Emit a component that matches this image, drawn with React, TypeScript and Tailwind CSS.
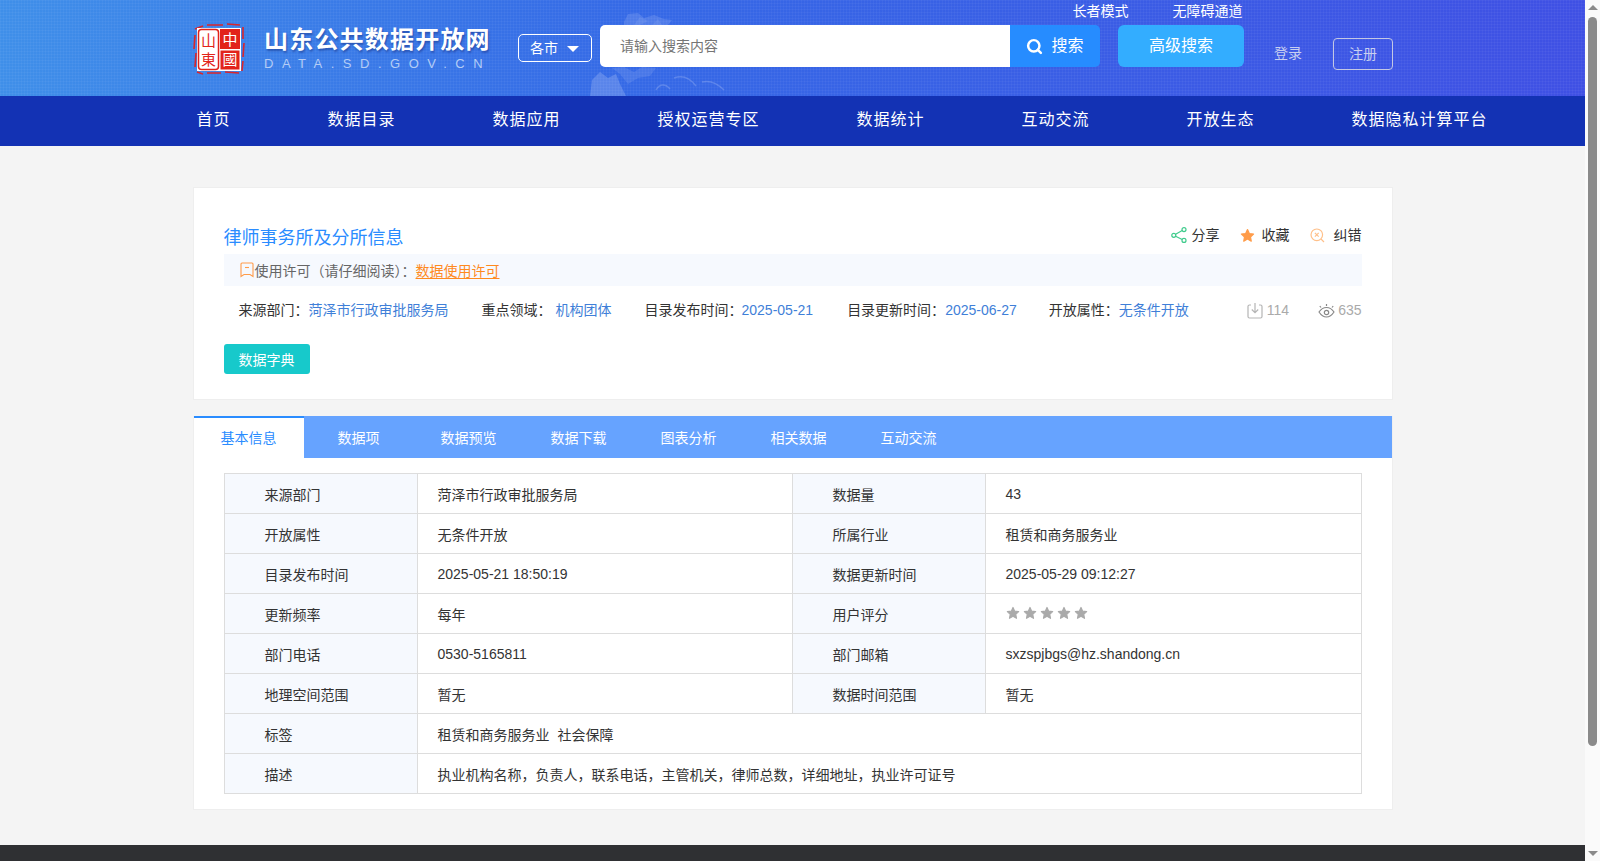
import { Search } from "lucide-react";

const font = `font-['Liberation_Sans','Noto_Sans_CJK_SC',sans-serif]`;

const navItems = ["首页", "数据目录", "数据应用", "授权运营专区", "数据统计", "互动交流", "开放生态", "数据隐私计算平台"];
const tabs = ["基本信息", "数据项", "数据预览", "数据下载", "图表分析", "相关数据", "互动交流"];

const rows: [string, string, string, string][] = [
  ["来源部门", "菏泽市行政审批服务局", "数据量", "43"],
  ["开放属性", "无条件开放", "所属行业", "租赁和商务服务业"],
  ["目录发布时间", "2025-05-21 18:50:19", "数据更新时间", "2025-05-29 09:12:27"],
  ["更新频率", "每年", "用户评分", ""],
  ["部门电话", "0530-5165811", "部门邮箱", "sxzspjbgs@hz.shandong.cn"],
  ["地理空间范围", "暂无", "数据时间范围", "暂无"],
];

function Logo() {
  return (
    <svg width="52" height="52" viewBox="0 0 52 52" className="shrink-0">
      <path d="M2 6 L10 3 M14 2 L30 2 M34 1 L47 2 M50 4 L50 16 M51 20 L50 34 M50 38 L49 48 M46 50 L32 49 M28 50 L14 50 M10 51 L4 49 M2 44 L3 30 M1 26 L2 12" fill="none" stroke="#d9262c" strokeWidth="1.6" />
      <rect x="4" y="5" width="44" height="43" fill="#fff" />
      <rect x="5.500" y="6.500" width="20" height="40" rx="3" fill="#fff" stroke="#e2231a" strokeWidth="1.500" />
      <rect x="27" y="6" width="20" height="20" fill="#e2231a" />
      <rect x="27.500" y="27.500" width="19" height="19" fill="#e2231a" />
      <text x="15.500" y="23" textAnchor="middle" fontSize="15" fill="#e2231a" fontFamily="'Noto Sans CJK SC',sans-serif">山</text>
      <text x="15.500" y="42" textAnchor="middle" fontSize="15" fill="#e2231a" fontFamily="'Noto Sans CJK SC',sans-serif">東</text>
      <text x="37" y="22" textAnchor="middle" fontSize="15" fill="#fff" fontFamily="'Noto Sans CJK SC',sans-serif">中</text>
      <text x="37" y="42" textAnchor="middle" fontSize="15" fill="#fff" fontFamily="'Noto Sans CJK SC',sans-serif">國</text>
    </svg>
  );
}

function Star({ className }: { className: string }) {
  return (
    <svg viewBox="0 0 24 24" className={className} fill="currentColor" stroke="currentColor" strokeWidth="2" strokeLinejoin="round">
      <path d="M12 2.500l2.900 6.300 6.800.8-5 4.700 1.300 6.800L12 17.700l-6 3.400 1.300-6.800-5-4.700 6.800-.8z" />
    </svg>
  );
}

function Header() {
  return (
    <div className="relative h-[96px] overflow-hidden [background-image:linear-gradient(rgba(255,255,255,.035)_1px,transparent_1px),linear-gradient(90deg,rgba(255,255,255,.035)_1px,transparent_1px),linear-gradient(90deg,#3f8fe9,#3569e6_40%,#3f50e4)] [background-size:3px_3px,3px_3px,100%_100%]">
      {/* faded map art behind the search box */}
      <svg width="160" height="96" viewBox="0 0 160 96" className="absolute left-[590px] top-0" fill="#fff">
        <path opacity=".13" d="M34 22 L38 14 L48 13 L54 18 L64 15 L74 19 L82 20 L78 25 L34 25 Z" />
        <path opacity=".08" d="M44 25 L50 17 L58 21 L50 25 Z M62 25 L68 19 L72 25 Z" />
        <path opacity=".18" d="M0 96 L2 80 L10 72 L18 78 L26 74 L30 84 L36 96 Z" />
        <path opacity=".1" d="M22 68 L34 67 L44 72 L52 67 L66 68 L60 76 L48 78 L38 84 L30 74 Z" />
        <path opacity=".18" fill="none" stroke="#fff" strokeWidth="1.500" d="M66 90 C70 83 76 84 80 89 M84 78 C92 75 100 78 106 86 M112 82 C120 80 128 84 134 90" />
      </svg>
      <div className="relative w-[1200px] mx-auto h-full">
        <div className="h-[25px] flex justify-end gap-[44px] pr-[150px] text-sm leading-[23px] text-white">
          <span>长者模式</span>
          <span>无障碍通道</span>
        </div>
        <div className="flex items-start pl-[0.500px]">
          <div className="-mt-[2px]">
            <Logo />
          </div>
          <div className="ml-[19px] w-[254px] shrink-0 pt-[1px]">
            <div className="text-[24px] leading-[28px] font-bold tracking-[1.200px] text-white whitespace-nowrap [text-shadow:1px_2px_2px_rgba(20,40,120,.45)]">山东公共数据开放网</div>
            <div className="text-[13px] leading-[14px] mt-[3px] tracking-[8.500px] text-[#b4cdf6] whitespace-nowrap">DATA.SD.GOV.CN</div>
          </div>
          <div className="mt-[9px] w-[74px] h-[28px] shrink-0 border border-white rounded-[5px] flex items-center pl-[11px] gap-[9px] text-sm text-white">
            <span>各市</span>
            <span className="w-0 h-0 border-x-[6px] border-x-transparent border-t-[6px] border-t-white mt-[2px]" />
          </div>
          <div className="ml-[8px] flex h-[42px] shrink-0">
            <div className="w-[410px] bg-white rounded-l-[5px] pl-5 flex items-center text-sm text-[#757575]">请输入搜索内容</div>
            <div className="w-[90px] bg-[#268cff] rounded-r-[5px] flex items-center justify-center gap-[8px] text-[16px] text-white">
              <Search size={17} strokeWidth={3.500} />
              <span>搜索</span>
            </div>
          </div>
          <div className="ml-[18px] w-[126px] h-[42px] shrink-0 bg-[#33adff] rounded-[6px] flex items-center justify-center text-[16px] text-white">高级搜索</div>
          <span className="ml-[30px] mt-[9px] shrink-0 whitespace-nowrap text-sm leading-[38px] text-[#c8cff0]">登录</span>
          <div className="ml-[31px] mt-[13px] w-[60px] h-[32px] shrink-0 border border-[#c4c8e4] rounded-[4px] flex items-center justify-center text-sm text-[#c8cff0]">注册</div>
        </div>
      </div>
    </div>
  );
}

function Nav() {
  return (
    <div className="h-[50px] bg-[#1332b4]">
      <div className="w-[1200px] mx-auto h-full flex items-center gap-[97px] pl-[4px] pb-[2px] text-[16px] tracking-[1px] text-white whitespace-nowrap">
        {navItems.map((n) => (
          <span key={n}>{n}</span>
        ))}
      </div>
    </div>
  );
}

function Summary() {
  return (
    <div className="mt-[41px] h-[213px] bg-white border border-[#eeeeee] px-[30px] pt-[37px]">
      <div className="flex items-start justify-between h-[29px]">
        <div className="text-[18px] leading-[26px] text-[#2a8cff]">律师事务所及分所信息</div>
        <div className="flex items-center text-sm text-[#333]">
          <svg width="16" height="16" viewBox="0 0 16 16" fill="none" stroke="#3fcb8c" strokeWidth="1.200">
            <circle cx="2.800" cy="8.300" r="2" />
            <circle cx="13" cy="2.600" r="2" />
            <circle cx="13" cy="13.400" r="2" />
            <path d="M4.600 7.300l6.600-3.700M4.600 9.300l6.600 3.200" />
          </svg>
          <span className="ml-[5px]">分享</span>
          <Star className="ml-[20px] w-[15px] h-[15px] text-[#ff9c4a]" />
          <span className="ml-[7px]">收藏</span>
          <svg width="15" height="15" viewBox="0 0 15 15" fill="none" stroke="#ffc08a" strokeWidth="1.200" className="ml-[20px]">
            <circle cx="6.800" cy="6.800" r="5.800" />
            <path d="M4.900 4.900l3.800 3.800M8.700 4.900l-3.800 3.800M11 11l3 3" />
          </svg>
          <span className="ml-[9px]">纠错</span>
        </div>
      </div>
      <div className="h-[32px] bg-[#f6f9fe] flex items-center pl-[16px] pt-[1px] text-sm text-[#666]">
        <svg width="14" height="16" viewBox="0 0 14 16" fill="none" stroke="#ff9c4a" strokeWidth="1.100" className="-mt-[2px] mr-[1px]">
          <path d="M2 1h10a1 1 0 0 1 1 1v12.500l-3-2H4l-3 2V2a1 1 0 0 1 1-1z" />
          <path d="M5 5.500h4" />
        </svg>
        <span>使用许可（请仔细阅读）：</span>
        <span className="text-[#ff8a1e] underline underline-offset-2">数据使用许可</span>
      </div>
      <div className="flex items-center h-[39px] mt-[4px] pl-[15px] text-sm text-[#333] whitespace-nowrap">
        <span>来源部门：</span>
        <span className="text-[#3f7fd8]">菏泽市行政审批服务局</span>
        <span className="ml-[33px]">重点领域：</span>
        <span className="ml-[4px] text-[#3f7fd8]">机构团体</span>
        <span className="ml-[33px]">目录发布时间：</span>
        <span className="-ml-[1px] text-[#3f7fd8]">2025-05-21</span>
        <span className="ml-[34px]">目录更新时间：</span>
        <span className="text-[#3f7fd8]">2025-06-27</span>
        <span className="ml-[32px]">开放属性：</span>
        <span className="text-[#3f7fd8]">无条件开放</span>
        <span className="ml-auto flex items-center text-[#aaaaaa]">
          <svg width="16" height="17" viewBox="0 0 16 17" fill="none" stroke="#b5b5b5" strokeWidth="1.200" className="mt-[2px]">
            <path d="M4 3H2.500A1.500 1.500 0 0 0 1 4.500v10A1.500 1.500 0 0 0 2.500 16h11a1.500 1.500 0 0 0 1.500-1.500v-10A1.500 1.500 0 0 0 13.500 3H12" />
            <path d="M8 1v9M4.800 7.500L8 10.700l3.200-3.200" />
          </svg>
          <span className="ml-[4px]">114</span>
          <svg width="17" height="16" viewBox="0 0 17 16" fill="none" stroke="#888" strokeWidth="1.200" className="ml-[29px] mt-[3px]">
            <path d="M1 9c2-3 4.500-4.500 7.500-4.500S14 6 16 9c-2 3-4.500 5-7.500 5S3 12 1 9z" />
            <circle cx="8.500" cy="9.500" r="2.200" />
            <path d="M3 4.500L1.800 3M8.500 3V1M14 4.500L15.200 3" />
          </svg>
          <span className="ml-[3px]">635</span>
        </span>
      </div>
      <div className="mt-[15px] w-[86px] h-[30px] pt-[1px] bg-[#17c9cb] rounded-[3px] flex items-center justify-center text-sm text-white">数据字典</div>
    </div>
  );
}

function InfoTable() {
  const label = "w-[193px] bg-[#f6f9fe] border border-[#dddddd] pl-[40px] pt-[2px] text-[#333]";
  const value = "border border-[#dddddd] pl-[20px] text-[#333]";
  const cjkValue = `${value} pt-[2px]`;
  const valueClass = (text: string) => (/[^\x00-\x7f]/.test(text) ? cjkValue : value);
  return (
    <table className="w-[1137px] table-fixed border-collapse text-sm">
      <colgroup>
        <col className="w-[193px]" />
        <col className="w-[375px]" />
        <col className="w-[193px]" />
        <col className="w-[376px]" />
      </colgroup>
      <tbody>
        {rows.map((r) => (
          <tr key={r[0]} className="h-[40px]">
            <td className={label}>{r[0]}</td>
            <td className={valueClass(r[1])}>{r[1]}</td>
            <td className={label}>{r[2]}</td>
            <td className={valueClass(r[3])}>
              {r[2] === "用户评分" ? (
                <div className="flex gap-[3px] -mt-[1px]">
                  {[0, 1, 2, 3, 4].map((i) => (
                    <Star key={i} className="w-[14px] h-[14px] text-[#aaaaaa]" />
                  ))}
                </div>
              ) : (
                r[3]
              )}
            </td>
          </tr>
        ))}
        <tr className="h-[40px]">
          <td className={label}>标签</td>
          <td className={cjkValue} colSpan={3}>
            <span>租赁和商务服务业</span>
            <span className="ml-[8px]">社会保障</span>
          </td>
        </tr>
        <tr className="h-[40px]">
          <td className={label}>描述</td>
          <td className={cjkValue} colSpan={3}>执业机构名称，负责人，联系电话，主管机关，律师总数，详细地址，执业许可证号</td>
        </tr>
      </tbody>
    </table>
  );
}

function Detail() {
  return (
    <div className="mt-[16px] h-[394px] bg-white border-x border-b border-[#eeeeee]">
      <div className="h-[42px] bg-[#66a3ff] flex text-sm text-white">
        {tabs.map((t, i) => (
          <div
            key={t}
            className={
              i === 0
                ? "w-[110px] bg-white border-t-2 border-[#2a8cff] text-[#2a8cff] flex items-center justify-center"
                : "w-[110px] pt-[2px] flex items-center justify-center"
            }
          >
            {t}
          </div>
        ))}
      </div>
      <div className="px-[30px] pt-[15px]">
        <InfoTable />
      </div>
    </div>
  );
}

function Scrollbar() {
  return (
    <div className="w-[15px] h-full shrink-0 bg-[#fafafa] flex flex-col items-center">
      <span className="mt-[5px] w-0 h-0 border-x-[5px] border-x-transparent border-b-[5px] border-b-[#8a8a8a]" />
      <div className="mt-[7px] w-[9px] h-[729px] rounded-[5px] bg-[#8a8a8a]" />
      <span className="mt-auto mb-[5px] w-0 h-0 border-x-[5px] border-x-transparent border-t-[5px] border-t-[#8a8a8a]" />
    </div>
  );
}

export default function App() {
  return (
    <div className={`${font} flex h-[861px] w-full overflow-hidden bg-[#f4f4f4]`}>
      <div className="flex-1 min-w-0 flex flex-col">
        <Header />
        <Nav />
        <div className="w-[1200px] mx-auto flex-1">
          <Summary />
          <Detail />
        </div>
        <div className="h-[16px] bg-[#2f3033]" />
      </div>
      <Scrollbar />
    </div>
  );
}
